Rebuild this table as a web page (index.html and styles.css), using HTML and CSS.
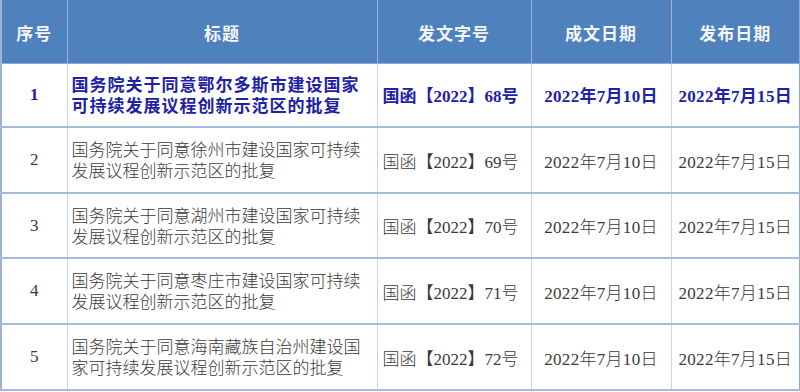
FILE: index.html
```html
<!DOCTYPE html>
<html lang="zh-CN">
<head>
<meta charset="utf-8">
<title>批复列表</title>
<link rel="stylesheet" href="styles.css">
</head>
<body>
<table class="docs">
  <colgroup>
    <col class="c-no">
    <col class="c-title">
    <col class="c-code">
    <col class="c-date">
    <col class="c-pub">
  </colgroup>
  <thead>
    <tr class="head">
      <th>序号</th>
      <th>标题</th>
      <th>发文字号</th>
      <th>成文日期</th>
      <th>发布日期</th>
    </tr>
  </thead>
  <tbody>
    <tr class="row r1 active">
      <td class="no">1</td>
      <td class="title">国务院关于同意鄂尔多斯市建设国家可持续发展议程创新示范区的批复</td>
      <td class="code">国函【2022】68号</td>
      <td class="date">2022年7月10日</td>
      <td class="date">2022年7月15日</td>
    </tr>
    <tr class="row r2">
      <td class="no">2</td>
      <td class="title">国务院关于同意徐州市建设国家可持续发展议程创新示范区的批复</td>
      <td class="code">国函【2022】69号</td>
      <td class="date">2022年7月10日</td>
      <td class="date">2022年7月15日</td>
    </tr>
    <tr class="row r3">
      <td class="no">3</td>
      <td class="title">国务院关于同意湖州市建设国家可持续发展议程创新示范区的批复</td>
      <td class="code">国函【2022】70号</td>
      <td class="date">2022年7月10日</td>
      <td class="date">2022年7月15日</td>
    </tr>
    <tr class="row r4">
      <td class="no">4</td>
      <td class="title">国务院关于同意枣庄市建设国家可持续发展议程创新示范区的批复</td>
      <td class="code">国函【2022】71号</td>
      <td class="date">2022年7月10日</td>
      <td class="date">2022年7月15日</td>
    </tr>
    <tr class="row r5">
      <td class="no">5</td>
      <td class="title">国务院关于同意海南藏族自治州建设国家可持续发展议程创新示范区的批复</td>
      <td class="code">国函【2022】72号</td>
      <td class="date">2022年7月10日</td>
      <td class="date">2022年7月15日</td>
    </tr>
  </tbody>
</table>
</body>
</html>
```

FILE: styles.css
```css
html, body {
  margin: 0;
  padding: 0;
  background: #ffffff;
}

.docs {
  width: 799px;
  table-layout: fixed;
  border-collapse: collapse;
  font-family: "Liberation Serif", "Noto Sans CJK SC", serif;
  font-size: 17px;
  font-weight: 300;
  color: #3a3a3a;
}

.c-no { width: 66px; }
.c-title { width: 310px; }
.c-code { width: 154px; }
.c-date { width: 140px; }
.c-pub { width: 129px; }

.head {
  height: 63px;
  background: #4f81bd;
}

.head th {
  color: #f4f6fa;
  font-weight: bold;
  letter-spacing: 1px;
  text-align: center;
  vertical-align: middle;
  padding: 0;
  border-left: 1px solid #9ab3d6;
  border-right: 1px solid #9ab3d6;
  border-bottom: 1px solid #8eaad3;
  padding-top: 3px;
}

.row td {
  vertical-align: middle;
  padding: 0;
  border-left: 1px solid #c8d5ea;
  border-right: 1px solid #c8d5ea;
  border-bottom: 2px solid #a4bbdc;
}

.docs td:first-child,
.docs th:first-child {
  border-left: 2px solid #9cb3d6;
}

.docs td:last-child,
.docs th:last-child {
  border-right: 2px solid #8ba8d2;
}

.r1 { height: 64px; }
.r2 { height: 66px; }
.r3 { height: 65px; }
.r4 { height: 66px; }
.r5 { height: 66px; }

.no {
  text-align: center;
}

.title {
  text-align: left;
  line-height: 21px;
  padding: 2px 6px 0 4px !important;
}

.code {
  text-align: left;
  padding-left: 5px !important;
  white-space: nowrap;
}

.date {
  text-align: center;
  white-space: nowrap;
  letter-spacing: 0.3px;
}

.active td {
  color: #2121a3;
  font-weight: bold;
}

.active .title {
  letter-spacing: 1px;
}
```
